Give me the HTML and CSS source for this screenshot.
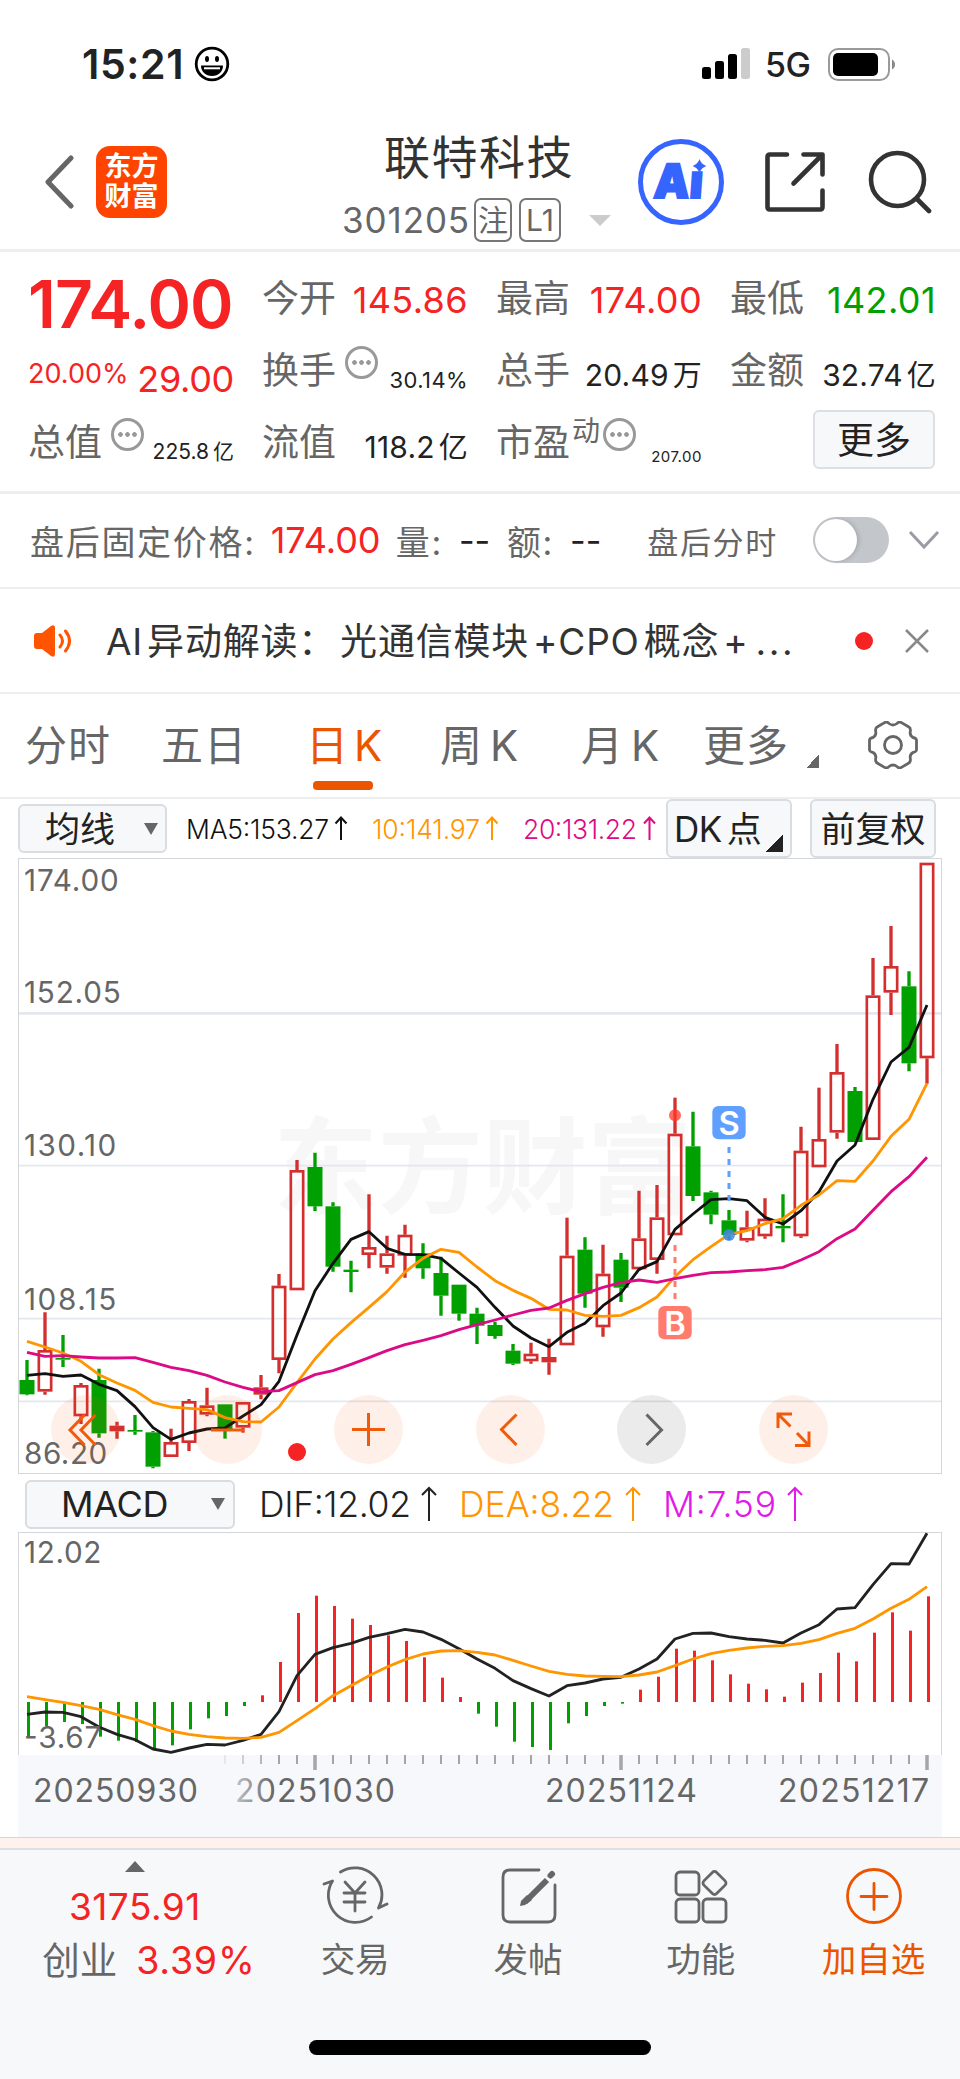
FILE: index.html
```html
<!DOCTYPE html>
<html lang="zh-CN">

<head>
    <meta charset="UTF-8">
    <meta name="viewport" content="width=device-width, initial-scale=1.0">
    <title>联特科技 301205</title>
    <link rel="stylesheet" href="styles.css">
</head>

<body>
    <div class="status-bar">
        <span class="time">15:21</span>
        <svg class="smiley" width="36" height="36" viewBox="0 0 36 36">
            <circle cx="18" cy="18" r="15.8" fill="none" stroke="#000" stroke-width="2.800" />
            <ellipse cx="13" cy="13" rx="2" ry="3" />
            <ellipse cx="23" cy="13" rx="2" ry="3" />
            <path d="M7 19.500h22c0 6-4.500 10.500-11 10.500s-11-4.500-11-10.500z" />
            <path d="M10 22.300h16" stroke="#fff" stroke-width="2" />
        </svg>
        <svg class="signal" width="49" height="32" viewBox="0 0 49 32">
            <rect x="0" y="19" width="9" height="12" rx="2.500" />
            <rect x="13" y="13" width="9" height="18" rx="2.500" />
            <rect x="26" y="6" width="9" height="25" rx="2.500" />
            <rect x="39" y="0" width="9" height="31" rx="2.500" fill="#ccc" />
        </svg>
        <span class="network">5G</span>
        <svg class="battery" width="68" height="33" viewBox="0 0 68 33">
            <rect x="1" y="1" width="60" height="31" rx="9" fill="none" stroke="#9a9a9a" stroke-width="2" />
            <rect x="5" y="5" width="45" height="23" rx="5" />
            <path d="M64 11.500c4 2 4 8 0 10z" fill="#888" />
        </svg>
    </div>

    <header class="nav">
        <svg class="back" width="30" height="54" viewBox="0 0 30 54">
            <path d="M27 3 4 27l23 24" fill="none" stroke="#666" stroke-width="5" stroke-linecap="round" stroke-linejoin="round" />
        </svg>
        <div class="logo"><span>东方</span><span>财富</span></div>
        <div class="stock">
            <h1>联特科技</h1>
            <div class="code">
                <span class="num">301205</span>
                <span class="tag">注</span>
                <span class="tag tag-wide">L1</span>
                <i class="caret-down"></i>
            </div>
        </div>
        <svg class="ai" width="86" height="88" viewBox="0 0 86 88">
            <circle cx="43" cy="44" r="40.500" fill="none" stroke="#3664ff" stroke-width="5" />
            <text class="ai-text" transform="translate(15 59.500) skewX(-4)" textLength="49" lengthAdjust="spacingAndGlyphs">Aı</text>
            <path d="M61.500 21c1.500 4 3.500 5.500 7 7-3.500 1.500-5.500 3-7 7-1.500-4-3.500-5.500-7-7 3.500-1.500 5.500-3 7-7z" fill="#3664ff" />
        </svg>
        <svg class="share" width="60" height="60" viewBox="0 0 60 60">
            <path d="M22 2.500H5q-2.500 0-2.500 2.500v50q0 2.500 2.500 2.500h50q2.500 0 2.500-2.500V38.500M38.500 2.500h19v20M56 4 28.500 31.500" />
        </svg>
        <svg class="search" width="64" height="64" viewBox="0 0 64 64">
            <circle cx="29.500" cy="29.500" r="26.500" />
            <path d="m49 49 12 12" />
        </svg>
    </header>

    <section class="quote">
        <div class="cell"><b class="price">174.00</b></div>
        <div class="cell"><label>今开</label><span class="val red">145.86</span></div>
        <div class="cell"><label>最高</label><span class="val red">174.00</span></div>
        <div class="cell"><label>最低</label><span class="val green">142.01</span></div>

        <div class="cell"><span class="pct red">20.00%</span><span class="chg red">29.00</span></div>
        <div class="cell"><label>换手</label><i class="info"></i><span class="val sm">30.14%</span></div>
        <div class="cell"><label>总手</label><span class="val md">20.49<em>万</em></span></div>
        <div class="cell"><label>金额</label><span class="val md">32.74<em>亿</em></span></div>

        <div class="cell"><label>总值</label><i class="info"></i><span class="val sm cap">225.8<em>亿</em></span></div>
        <div class="cell"><label>流值</label><span class="val md">118.2<em>亿</em></span></div>
        <div class="cell"><label>市盈</label><span class="dyn">动</span><i class="info info-tight"></i><span class="val xs">207.00</span></div>
        <div class="cell"><button class="more">更多</button></div>
    </section>

    <section class="after">
        <span class="after-label">盘后固定价格:</span>
        <span class="after-price">174.00</span>
        <span class="after-label">量:</span><span class="dash">--</span>
        <span class="after-label">额:</span><span class="dash">--</span>
        <span class="after-time">盘后分时</span>
        <span class="switch"><i></i></span>
        <svg width="32" height="20" viewBox="0 0 32 20">
            <path d="m2 2 14 15L30 2" fill="none" stroke="#999ca3" stroke-width="3" />
        </svg>
    </section>

    <section class="notice">
        <svg width="40" height="34" viewBox="0 0 40 34">
            <path d="M3 9h5l9-7q4-2 4 2v26q0 4-4 2l-9-7H3q-3 0-3-3V12q0-3 3-3z" fill="#ff5500" />
            <path d="M26 11q5 6 0 12M31.500 7q8 10 0 20" fill="none" stroke="#ff5500" stroke-width="3" stroke-linecap="round" />
        </svg>
        <p>AI<span class="thin"></span>异动解读：<span class="thin"></span>光通信模块<span class="thin"></span>+CPO<span class="thin"></span>概念<span class="thin"></span>+<span class="dots">...</span></p>
        <i class="dot"></i>
        <svg width="24" height="24" viewBox="0 0 24 24">
            <path d="m1 1 22 22M23 1 1 23" fill="none" stroke="#888" stroke-width="2.500" />
        </svg>
    </section>

    <nav class="tabs">
        <a class="tab t1">分时</a>
        <a class="tab t2">五日</a>
        <a class="tab t3 active">日<span>K</span></a>
        <a class="tab t4">周<span>K</span></a>
        <a class="tab t5">月<span>K</span></a>
        <a class="tab t6">更多</a>
        <i class="corner"></i>
        <svg class="gear" width="50" height="48" viewBox="0 0 50 48">
            <path d="M48.500 19v10Q48 31 45 31.500 41.500 33.500 42.300 37.500 43 41 40.500 42.300L33 46.600Q30.500 47.500 29 45.500 25 42.500 21 45.500 19.500 47.500 17 46.600L9.500 42.300Q7 41 7.700 37.500 8.500 33.500 5 31.500 2 31 1.500 29V19Q2 17 5 16.500 8.500 14.500 7.700 10.500 7 7 9.500 5.700L17 1.400Q19.500.500 21 2.500 25 5.500 29 2.500 30.500.500 33 1.400L40.500 5.700Q43 7 42.300 10.500 41.500 14.500 45 16.500 48 17 48.500 19z" />
            <circle cx="25" cy="24" r="8.500" />
        </svg>
    </nav>

    <div class="ma-bar">
        <div class="select ma-select"><span>均线</span><i></i></div>
        <svg class="ma-text" width="480" height="40" viewBox="0 0 480 40">
            <text x="0" y="30" textLength="143" fill="#111">MA5:153.27</text>
            <path d="M155 31V9M149.500 14.500l5.500-6 5.500 6" stroke="#111" />
            <text x="186" y="30" textLength="108" fill="#ff9500">10:141.97</text>
            <path d="M306 31V9M300.500 14.500l5.500-6 5.500 6" stroke="#ff9500" />
            <text x="337" y="30" textLength="114" fill="#dd0a85">20:131.22</text>
            <path d="M463.500 31V9M458 14.500l5.500-6 5.500 6" stroke="#dd0a85" />
        </svg>
        <div class="tool dk"><span>DK</span>点<i></i></div>
        <div class="tool">前复权</div>
    </div>

    <div class="kline">
        <svg id="kline" width="924" height="615" viewBox="54 -786 2772 1845">
            <text class="watermark" x="820" y="255">东方财富</text>
            <g class="grid">
                <path d="M54-320h2772" stroke-width="8" />
                <path d="M54 137h2772M54 596h2772M54 844h2772" stroke-width="5" />
            </g>
            <g class="axis-text">
                <text x="72" y="-686" textLength="284">174.00</text>
                <text x="72" y="-350" textLength="290">152.05</text>
                <text x="72" y="108" textLength="277">130.10</text>
                <text x="72" y="571" textLength="277">108.15</text>
                <text x="72" y="1032" textLength="250">86.20</text>
            </g>
            <g id="candles"></g>
            <g id="ma"></g>
            <path d="M2025 375v165" stroke="#ff7b6b" stroke-width="9" stroke-dasharray="18 18" />
            <path d="M2187 81v165" stroke="#5fa0ff" stroke-width="9" stroke-dasharray="18 18" />
            <circle cx="2025" cy="-14" r="18" fill="#ff3a2a" opacity=".75" />
            <circle cx="2187" cy="345" r="18" fill="#3c88e6" opacity=".85" />
            <rect x="1975" y="558" width="100" height="100" rx="18" fill="#ff7b6b" />
            <rect x="2137" y="-42" width="100" height="100" rx="18" fill="#5fa0ff" />
            <text class="mark" x="2025" y="644">B</text>
            <text class="mark" x="2187" y="44">S</text>
            <circle cx="891" cy="996" r="27" fill="#f52323" />
        </svg>
        <div class="chart-tools">
            <button><svg viewBox="0 0 69 69"><path d="M33.500 20 19 35l14.500 15M44.500 20 30 35l14.500 15" /></svg></button>
            <button><svg viewBox="0 0 69 69"><path d="M18 35h33" /></svg></button>
            <button><svg viewBox="0 0 69 69"><path d="M18 34.500h33M34.500 18v33" /></svg></button>
            <button><svg viewBox="0 0 69 69"><path d="M40.500 19.500 25.500 34.500l15 15.500" /></svg></button>
            <button class="off"><svg viewBox="0 0 69 69"><path d="m29.500 19.500 15 15.500-15 15" /></svg></button>
            <button><svg viewBox="0 0 69 69"><path d="M19 33V19h14M19 19l12.500 12.500M50 36.500v14H36M50 50.500 38 38" /></svg></button>
        </div>
    </div>

    <div class="macd-bar">
        <div class="select macd-select"><span>MACD</span><i></i></div>
        <svg class="macd-text" width="560" height="50" viewBox="0 0 560 50">
            <text x="0" y="38" textLength="152" fill="#222">DIF:12.02</text>
            <path d="M170 42V9M163 16l7-7 7 7" stroke="#222" />
            <text x="200" y="38" textLength="155" fill="#ff9500">DEA:8.22</text>
            <path d="M374 42V9M367 16l7-7 7 7" stroke="#ff9500" />
            <text x="404" y="38" textLength="113" fill="#e01be8">M:7.59</text>
            <path d="M536 42V9M529 16l7-7 7 7" stroke="#e01be8" />
        </svg>
    </div>

    <div class="macd">
        <svg id="macd" width="924" height="223" viewBox="54 186 2772 669">
            <g class="axis-text">
                <text x="72" y="278" textLength="232">12.02</text>
            </g>
            <g id="bars"></g>
            <g id="macdLines"></g>
            <g class="axis-text">
                <text x="72" y="833" textLength="232">-3.67</text>
            </g>
        </svg>
    </div>
    <div class="dates">
        <svg width="924" height="82" viewBox="18 1755 924 82">
            <g id="ticks"></g>
            <text x="33" y="1802" textLength="165">20250930</text>
            <text x="235" y="1802" textLength="160">20251030</text>
            <text x="545" y="1802" textLength="152">20251124</text>
            <text x="778" y="1802" textLength="151">20251217</text>
            <defs>
                <linearGradient id="fade">
                    <stop offset="0" stop-color="#f7f8fb" />
                    <stop offset="1" stop-color="#f7f8fb" stop-opacity="0" />
                </linearGradient>
            </defs>
            <rect x="212" y="1755" width="62" height="60" fill="url(#fade)" />
        </svg>
    </div>
    <div class="strip"></div>

    <footer class="tabbar">
        <div class="index">
            <i class="caret-up"></i>
            <span class="points">3175.91</span>
            <div class="index-row"><span>创业</span><span class="rate red">3.39%</span></div>
        </div>
        <div class="item">
            <svg width="68" height="60" viewBox="0 0 68 60">
                <path d="M19.500 6A27 27 0 0 1 57.500 42L66 38M50.500 51A27 27 0 0 1 11.500 15L3 18" />
                <path d="m24 16 10 11 10-11M23 27h21M23 36h21M34 27v18" />
            </svg>
            <span>交易</span>
        </div>
        <div class="item">
            <svg width="58" height="60" viewBox="0 0 58 60">
                <path d="M40 4H11q-7 0-7 7v38q0 7 7 7h38q7 0 7-7V19" />
                <path d="M48 14 26 36" stroke-width="6" stroke-linecap="butt" />
                <path d="m28 29 5 5-7 5-5 1 1-5z" fill="#666" stroke="none" />
                <path d="M51.500 9.500 53 8" stroke-width="6" />
            </svg>
            <span>发帖</span>
        </div>
        <div class="item">
            <svg width="58" height="60" viewBox="0 0 58 60">
                <rect x="4" y="6" width="23" height="23" rx="4" />
                <rect x="4" y="33" width="23" height="23" rx="4" />
                <rect x="31" y="33" width="23" height="23" rx="4" />
                <rect x="33.500" y="8" width="18" height="18" rx="3" transform="rotate(45 42.500 17)" />
            </svg>
            <span>功能</span>
        </div>
        <div class="item add">
            <svg width="60" height="60" viewBox="0 0 60 60">
                <circle cx="30" cy="30" r="26.500" />
                <path d="M17 30.500h26M30 17.500v26" />
            </svg>
            <span>加自选</span>
        </div>
    </footer>
    <div class="home"><i></i></div>

    <script src="chart.js"></script>
</body>

</html>
```
FILE: styles.css
```css
* {
    box-sizing: border-box;
}

body {
    margin: 0;
    width: 960px;
    background-color: #fff;
    color: #222;
    font-family: Inter, "Noto Sans CJK SC", sans-serif;
    font-size: 36px;
    -webkit-font-smoothing: antialiased;
}

svg {
    display: block;
    flex: none;
}

i,
em {
    font-style: normal;
}

button {
    font-family: inherit;
    padding: 0;
    border: none;
}

.red {
    color: #f52323;
}

.green {
    color: #00a000;
}

/* status bar */
.status-bar {
    display: flex;
    align-items: center;
    height: 110px;
    padding: 18px 64px 0 82px;
}

.time {
    width: 112px;
    font-size: 41px;
    font-weight: 600;
    letter-spacing: 0.6px;
}

.signal {
    margin-left: auto;
}

.network {
    width: 46px;
    margin: 0 17px 0 14px;
    font-size: 34px;
    font-weight: 500;
    letter-spacing: -0.5px;
}

/* header */
.nav {
    display: flex;
    align-items: center;
    height: 142px;
    padding: 5px 28px 0 44px;
    border-bottom: 3px solid #eee;
}

.logo {
    display: flex;
    flex-direction: column;
    justify-content: center;
    width: 71px;
    height: 72px;
    margin-left: 22px;
    border-radius: 14px;
    background-color: #ff4400;
    color: #fff;
    font-size: 27px;
    font-weight: 700;
    line-height: 30px;
    text-align: center;
}

.stock {
    width: 290px;
    margin: 14px 0 0 167px;
}

.stock h1 {
    margin: 0;
    color: #333;
    font-size: 46px;
    font-weight: 400;
    line-height: 62px;
    letter-spacing: 1.5px;
    text-align: center;
}

.code {
    display: flex;
    align-items: center;
    height: 64px;
    padding-left: 8px;
    color: #666;
}

.code .num {
    width: 132px;
    font-size: 35px;
    letter-spacing: 0.9px;
}

.tag {
    width: 38px;
    height: 44px;
    margin-right: 7px;
    border: 2px solid #777;
    border-radius: 7px;
    font-size: 30px;
    line-height: 40px;
    text-align: center;
}

.tag-wide {
    width: 42px;
    margin-right: 28px;
}

.caret-down {
    border: 11px solid transparent;
    border-top-color: #ccc;
    border-bottom: 0;
}

.ai {
    margin-left: 14px;
}

.ai-text {
    fill: #3664ff;
    stroke: #3664ff;
    stroke-width: 2px;
    font-size: 47px;
    font-weight: 900;
}

.share,
.search {
    fill: none;
    stroke: #333;
    stroke-width: 4.6px;
    stroke-linecap: round;
    stroke-linejoin: round;
}

.share {
    margin-left: 41px;
}

.search {
    margin-left: 43px;
}

/* quote */
.quote {
    display: grid;
    grid-template-columns: repeat(4, 206px);
    grid-auto-rows: 72px;
    column-gap: 28px;
    height: 242px;
    padding: 10px 0 0 28px;
    border-bottom: 3px solid #eee;
}

.cell {
    display: flex;
    align-items: center;
    white-space: nowrap;
    line-height: 40px;
}

.cell label {
    padding-top: 2px;
    color: #666;
    font-size: 37px;
}

.price {
    padding-top: 11px;
    color: #f52323;
    font-size: 66px;
    font-weight: 600;
    letter-spacing: -0.9px;
}

.val {
    margin-left: auto;
    padding-top: 3px;
    letter-spacing: 0.4px;
}

.val em {
    margin-left: 4px;
}

.val.md {
    padding-top: 10px;
    font-size: 30px;
    letter-spacing: 0.2px;
}

.val.md em {
    font-size: 29px;
}

.val.sm {
    padding-top: 20px;
    font-size: 22px;
    letter-spacing: 0.4px;
}

.val.cap {
    font-size: 21px;
    letter-spacing: 0;
}

.val.xs {
    padding-top: 29px;
    font-size: 15px;
    letter-spacing: 0.5px;
}

.pct {
    padding-top: 8px;
    font-size: 27px;
}

.chg {
    margin-left: auto;
    padding-top: 17px;
    letter-spacing: -0.3px;
}

.info {
    width: 33px;
    height: 33px;
    margin: 0 0 15px 9px;
    border: 3px solid #999;
    border-radius: 50%;
    background: radial-gradient(circle, #999 2px, transparent 2.6px) center / 7px 7px repeat-x;
    background-clip: content-box;
    padding: 0 3px;
}

.info-tight {
    margin-left: 3px;
}

.dyn {
    padding-bottom: 22px;
    margin-left: 2px;
    color: #666;
    font-size: 28px;
}

.more {
    width: 122px;
    height: 59px;
    margin: -6px 1px 0 auto;
    border: 2px solid #dcdfe3;
    border-radius: 6px;
    background-color: #f6f8fa;
    color: #222;
    font-size: 37px;
    line-height: 57px;
}

/* after-hours */
.after {
    display: flex;
    align-items: center;
    height: 95px;
    padding: 0 20px 1px 30px;
    border-bottom: 2px solid #eee;
    color: #666;
    white-space: nowrap;
}

.after-label {
    font-size: 34px;
    letter-spacing: 1.7px;
}

.after-price {
    width: 125px;
    margin-left: 15px;
    color: #f52323;
}

.dash {
    width: 48px;
    margin-left: 16px;
    color: #222;
    font-size: 34px;
}

.after-time {
    margin-left: auto;
    font-size: 31px;
    letter-spacing: 1.7px;
}

.switch {
    width: 76px;
    height: 46px;
    margin: 0 19px 0 35px;
    padding: 2px;
    border-radius: 23px;
    background-color: #c3c6cb;
}

.switch i {
    display: block;
    width: 42px;
    height: 42px;
    border-radius: 50%;
    background-color: #fff;
    box-shadow: 2px 0 4px rgba(0, 0, 0, 0.15);
}

/* AI notice */
.notice {
    display: flex;
    align-items: center;
    height: 105px;
    padding: 0 31px 0 34px;
    border-bottom: 2px solid #eee;
}

.notice p {
    margin: 0 auto 3px 32px;
    color: #333;
    font-size: 37px;
    letter-spacing: 0.8px;
    white-space: nowrap;
}

.thin {
    display: inline-block;
    width: 4px;
}

.dots {
    margin-left: 7px;
    letter-spacing: 2.5px;
}

.dot {
    width: 18px;
    height: 18px;
    margin-right: 32px;
    border-radius: 50%;
    background-color: #f52323;
}

/* period tabs */
.tabs {
    display: grid;
    grid-template-columns: 136px 145px 134px 141px 122px 102px 70px 50px;
    height: 105px;
    padding-left: 25px;
    border-bottom: 2px solid #eee;
    color: #666;
    font-size: 42px;
    line-height: 103px;
}

.tab {
    white-space: nowrap;
    letter-spacing: 1px;
}

.tab span {
    margin-left: 5px;
}

.t4 span,
.t5 span {
    margin-left: 7px;
}

.t3 {
    display: flex;
    flex-wrap: wrap;
}

.active {
    color: #eb5500;
}

.active::after {
    content: "";
    width: 60px;
    height: 9px;
    margin: -16px 0 0 7px;
    border-radius: 4px;
    background-color: #eb5500;
}

.corner {
    align-self: start;
    width: 13px;
    height: 13px;
    margin: 61px 0 0 1px;
    background: linear-gradient(135deg, transparent 50%, #666 50%);
}

.gear {
    margin: 27px 0 0 -7px;
    fill: none;
    stroke: #666;
    stroke-width: 2.8px;
    stroke-linejoin: round;
}

/* moving averages bar */
.ma-bar {
    display: flex;
    align-items: center;
    height: 59px;
    padding-left: 18px;
}

.select {
    display: flex;
    align-items: center;
    height: 49px;
    border: 2px solid #d9dce0;
    border-radius: 6px;
    background-color: #f6f8fa;
}

.select i {
    border: 7px solid transparent;
    border-top: 12px solid #666;
    border-bottom: 0;
}

.ma-select {
    width: 149px;
    padding-left: 25px;
    font-size: 35px;
    line-height: 44px;
}

.ma-select i {
    margin-left: 29px;
}

.ma-text {
    margin-left: 19px;
    font-size: 26.5px;
    font-weight: 350;
}

.ma-text path,
.macd-text path {
    fill: none;
    stroke-width: 2px;
}

.tool {
    display: flex;
    align-items: center;
    justify-content: center;
    width: 126px;
    height: 59px;
    margin-left: 18px;
    border: 2px solid #d9dce0;
    border-radius: 6px;
    background-color: #f6f8fa;
    font-size: 35px;
    line-height: 50px;
}

.dk {
    justify-content: flex-start;
    margin-left: 0;
    padding-left: 6px;
}

.dk span {
    margin-right: 5px;
    letter-spacing: -0.5px;
}

.dk i {
    align-self: flex-end;
    width: 17px;
    height: 17px;
    margin: 0 0 4px 4px;
    background: linear-gradient(135deg, transparent 50%, #222 50%);
}

/* charts */
.kline {
    position: relative;
    width: 924px;
    height: 616px;
    margin-left: 18px;
    outline: 1px solid #d4d6da;
    outline-offset: -1px;
}

.watermark {
    fill: #f7f7f7;
    font-size: 314px;
    font-weight: 700;
}

.grid {
    stroke: #e3e7ee;
}

.axis-text {
    fill: #666;
    font-size: 89px;
}

.mark {
    fill: #fff;
    font-size: 98px;
    font-weight: 600;
    text-anchor: middle;
}

.chart-tools {
    position: absolute;
    left: 33px;
    top: 537px;
    display: flex;
    gap: 72.6px;
}

.chart-tools button {
    width: 69px;
    height: 69px;
    border-radius: 50%;
    background-color: rgba(240, 90, 10, 0.09);
}

.chart-tools path {
    fill: none;
    stroke: #f05a0a;
    stroke-width: 3px;
}

.chart-tools .off {
    background-color: rgba(0, 0, 0, 0.08);
}

.chart-tools .off path {
    stroke: #666;
}

.macd-bar {
    display: flex;
    align-items: center;
    height: 58px;
    padding: 2px 0 0 25px;
}

.macd-select {
    width: 210px;
    padding-left: 34px;
}

.macd-select span {
    width: 116px;
    letter-spacing: -0.3px;
}

.macd-select i {
    margin-left: 34px;
}

.macd-text {
    margin-left: 24px;
    font-size: 35.5px;
    font-weight: 350;
}

.macd {
    width: 924px;
    height: 223px;
    margin-left: 18px;
    border: 1px solid #d4d6da;
    border-bottom: 0;
}

.macd svg {
    margin: -1px;
}

.dates {
    width: 924px;
    height: 82px;
    margin-left: 18px;
    background-color: #f7f8fb;
    font-size: 32px;
}

.dates text {
    fill: #666;
}

.strip {
    height: 13px;
    border-top: 1px solid #d4d6da;
    border-bottom: 2px solid #dcdfe4;
    background-color: #fff2ec;
}

/* bottom bar */
.tabbar {
    display: flex;
    height: 150px;
    background-color: #f6f8fa;
    color: #666;
}

.index {
    display: flex;
    flex-direction: column;
    align-items: center;
    width: 269px;
    padding: 11px 0 0 1px;
}

.caret-up {
    border: 10px solid transparent;
    border-top: 0;
    border-bottom: 11px solid #666;
}

.points {
    margin-top: 9px;
    color: #f52323;
    font-size: 37px;
    line-height: 52px;
    letter-spacing: 0.5px;
}

.index-row {
    display: flex;
    gap: 19px;
    margin-left: 28px;
    font-size: 37.5px;
    line-height: 56px;
}

.rate {
    letter-spacing: 0.8px;
}

.item {
    display: flex;
    flex-direction: column;
    align-items: center;
    width: 173px;
    padding-top: 16px;
    font-size: 34.5px;
    line-height: 68px;
}

.item svg {
    fill: none;
    stroke: #666;
    stroke-width: 2.8px;
    stroke-linecap: round;
    stroke-linejoin: round;
}

.item.add {
    color: #eb5500;
}

.item.add svg {
    stroke: #eb5500;
}

.home {
    display: flex;
    justify-content: center;
    height: 79px;
    padding-top: 40px;
    background-color: #f6f8fa;
}

.home i {
    width: 342px;
    height: 15px;
    border-radius: 8px;
    background-color: #000;
}
```
FILE: chart.js
```javascript
var NS = 'http://www.w3.org/2000/svg';
var STEP = 54;
var X0 = 81;

// [high, body top, body bottom, low, up?]
var candles = [
    [720, 780, 823, 826, 0], [577, 690, 815, 824, 1], [645, 714, 719, 741, 0], [789, 795, 889, 912, 1],
    [746, 780, 940, 953, 0], [905, 917, 934, 956, 1], [885, 930, 935, 944, 0], [933, 937, 1040, 1045, 0],
    [926, 966, 1011, 1011, 1], [837, 843, 969, 993, 1], [803, 856, 884, 889, 1], [853, 853, 928, 956, 0],
    [846, 846, 923, 938, 1], [765, 802, 824, 838, 1], [462, 497, 720, 760, 1], [120, 150, 511, 511, 1],
    [98, 141, 259, 273, 0], [247, 259, 440, 455, 0], [422, 449, 456, 517, 0], [223, 381, 405, 445, 1],
    [347, 400, 443, 461, 1], [314, 344, 407, 473, 1], [370, 400, 445, 476, 0], [410, 459, 527, 587, 0],
    [494, 494, 581, 602, 0], [563, 581, 617, 672, 0], [605, 615, 648, 656, 0], [672, 692, 731, 735, 0],
    [668, 701, 724, 731, 1], [656, 711, 727, 764, 1], [293, 407, 676, 676, 1], [352, 389, 521, 563, 0],
    [374, 461, 622, 650, 1], [399, 419, 503, 546, 0], [212, 355, 448, 452, 1], [195, 292, 420, 461, 1],
    [-67, 41, 346, 346, 1], [-25, 79, 228, 243, 0], [212, 217, 284, 313, 0], [270, 301, 345, 360, 0],
    [272, 322, 362, 367, 1], [235, 296, 349, 356, 1], [223, 318, 325, 367, 0], [20, 92, 349, 354, 1],
    [-97, 57, 142, 142, 1], [-228, -144, 38, 56, 1], [-99, -87, 66, 66, 0], [-486, -374, 60, 60, 1],
    [-582, -462, -382, -315, 1], [-446, -401, -170, -146, 0], [-772, -772, -185, -109, 1]
];

var ma5 = [766, 761, 769, 765, 793, 812, 860, 923, 958, 939, 927, 924, 888, 854, 784, 645, 512, 430, 358, 335, 385, 403, 404, 415, 459, 502, 562, 618, 654, 680, 637, 610, 557, 519, 448, 425, 328, 282, 239, 236, 242, 292, 312, 272, 215, 123, 75, -62, -174, -218, -345];
var ma10 = [664, 681, 699, 724, 764, 789, 811, 847, 861, 865, 869, 893, 905, 906, 861, 788, 717, 657, 608, 562, 515, 456, 415, 388, 397, 441, 482, 511, 535, 568, 570, 586, 589, 586, 563, 531, 470, 419, 380, 343, 332, 311, 296, 256, 225, 182, 184, 123, 49, -2, -110];
var ma20 = [697, 709, 707, 711, 714, 714, 713, 727, 742, 752, 766, 786, 802, 815, 812, 788, 764, 752, 733, 713, 692, 674, 661, 647, 629, 614, 600, 585, 571, 564, 541, 521, 502, 488, 480, 487, 476, 466, 458, 456, 452, 449, 442, 420, 395, 356, 327, 271, 215, 170, 112];

var ZERO = 696;
var hist = [802, 768, 756, 762, 800, 812, 816, 837, 826, 778, 745, 738, 708, 676, 576, 429, 377, 408, 446, 465, 496, 513, 562, 623, 681, 731, 770, 815, 831, 840, 760, 738, 708, 701, 659, 620, 536, 542, 571, 613, 641, 658, 680, 638, 609, 548, 574, 488, 427, 482, 379];
var dif = [733, 726, 727, 740, 771, 793, 809, 837, 847, 834, 823, 825, 811, 793, 725, 617, 553, 533, 520, 502, 491, 478, 486, 508, 536, 567, 595, 632, 656, 678, 647, 639, 627, 622, 597, 567, 507, 490, 489, 500, 507, 511, 519, 489, 464, 417, 413, 344, 281, 282, 190];
var dea = [680, 689, 697, 707, 718, 734, 748, 767, 783, 793, 800, 804, 805, 802, 787, 752, 716, 677, 647, 617, 591, 569, 552, 543, 542, 547, 555, 571, 588, 604, 613, 618, 619, 620, 615, 606, 587, 567, 551, 541, 534, 529, 527, 520, 509, 490, 475, 447, 415, 388, 350];

function add(id, tag, attrs) {
    var el = document.createElementNS(NS, tag);
    for (var key in attrs) {
        el.setAttribute(key, attrs[key]);
    }
    document.getElementById(id).appendChild(el);
}

function drawLine(id, values, color) {
    var points = values.map(function (v, i) {
        return (X0 + i * STEP) + ',' + v;
    });
    add(id, 'polyline', { points: points.join(' '), fill: 'none', stroke: color, 'stroke-width': 8.5, 'stroke-linejoin': 'round' });
}

candles.forEach(function (c, i) {
    var x = X0 + i * STEP;
    var color = c[4] ? '#d32f2f' : '#00a000';
    // upper and lower wick, so hollow bodies stay see-through
    add('candles', 'path', {
        d: 'M' + x + ' ' + c[0] + 'V' + c[1] + 'M' + x + ' ' + c[2] + 'V' + c[3],
        stroke: color,
        'stroke-width': 10
    });
    if (c[4] && c[2] - c[1] > 18) {
        add('candles', 'rect', { x: x - 18.5, y: c[1] + 4, width: 37, height: c[2] - c[1] - 8, fill: 'none', stroke: color, 'stroke-width': 8 });
    } else {
        add('candles', 'rect', { x: x - 22.5, y: c[1], width: 45, height: c[2] - c[1], fill: color });
    }
});

drawLine('ma', ma5, '#111');
drawLine('ma', ma10, '#ff9500');
drawLine('ma', ma20, '#dd0a85');

hist.forEach(function (v, i) {
    add('bars', 'rect', {
        x: X0 + i * STEP,
        y: Math.min(v, ZERO),
        width: 9,
        height: Math.abs(v - ZERO),
        fill: v < ZERO ? '#f52323' : '#00a000'
    });
});

drawLine('macdLines', dif, '#222');
drawLine('macdLines', dea, '#ff9500');

for (var i = 11; i <= 50; i++) {
    var major = i === 16 || i === 33 || i === 50;
    add('ticks', 'path', {
        d: 'M' + (27 + i * 18) + ' 1755v' + (major ? 15 : 9),
        stroke: '#a6a6a8',
        'stroke-width': major ? 3.5 : 2
    });
}
```
